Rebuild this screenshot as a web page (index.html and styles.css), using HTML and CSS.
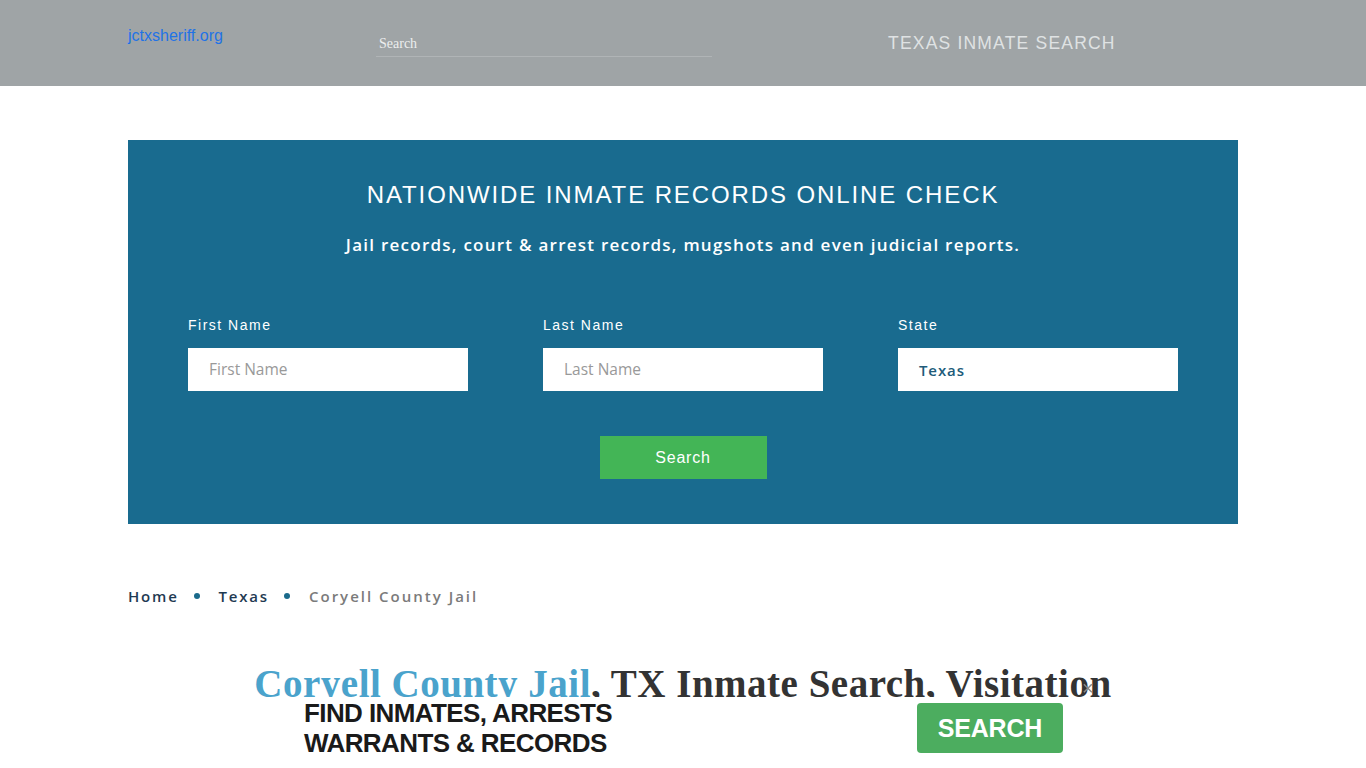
FILE: index.html
```html
<!DOCTYPE html>
<html lang="en">
<head>
<meta charset="utf-8">
<title>Coryell County Jail, TX Inmate Search, Visitation</title>
<link rel="stylesheet" href="styles.css">
</head>
<body>
<header class="topbar">
  <div class="container topbar-inner">
    <a class="logo" href="#">jctxsheriff.org</a>
    <div class="top-search"><input type="text" placeholder="Search"></div>
    <div class="top-title">TEXAS INMATE SEARCH</div>
  </div>
</header>

<main class="container">
  <section class="hero">
    <h2 class="hero-title">NATIONWIDE INMATE RECORDS ONLINE CHECK</h2>
    <p class="hero-sub">Jail records, court &amp; arrest records, mugshots and even judicial reports.</p>
    <form class="hero-form">
      <div class="field">
        <label>First Name</label>
        <input type="text" placeholder="First Name">
      </div>
      <div class="field">
        <label>Last Name</label>
        <input type="text" placeholder="Last Name">
      </div>
      <div class="field">
        <label>State</label>
        <div class="select">Texas</div>
      </div>
    </form>
    <div class="hero-btn-row"><button class="hero-btn" type="button">Search</button></div>
  </section>

  <nav class="crumbs">
    <a class="crumb" href="#">Home</a>
    <span class="dot"></span>
    <a class="crumb" href="#">Texas</a>
    <span class="dot"></span>
    <span class="crumb current">Coryell County Jail</span>
  </nav>

  <h1 class="page-title"><span class="hl">Coryell County Jail</span>, TX Inmate Search, Visitation</h1>
</main>

<div class="adbar">
  <div class="adbar-inner">
    <div class="ad-text">FIND INMATES, ARRESTS<br>WARRANTS &amp; RECORDS</div>
    <button class="ad-btn" type="button">SEARCH</button>
  </div>
  <span class="ad-close">&times;</span>
</div>
</body>
</html>
```

FILE: styles.css
```css
* { box-sizing: border-box; }
html, body { margin: 0; padding: 0; }
body {
  font-family: "Liberation Sans", Arial, sans-serif;
  background: #fff;
  color: #333;
  height: 768px;
  overflow: hidden;
}
.container {
  width: 1110px;
  margin: 0 auto;
}
.topbar {
  background: #9fa4a6;
  height: 86px;
}
.topbar-inner {
  display: flex;
  align-items: flex-start;
  height: 86px;
}
.logo {
  display: block;
  width: 251px;
  margin-top: 27px;
  font-size: 16px;
  color: #1f73e6;
  text-decoration: none;
  line-height: 18px;
}
.top-search {
  width: 336px;
  margin-top: 33px;
  margin-left: -3px;
  border-bottom: 1px solid #b0b4b6;
}
.top-search input {
  width: 100%;
  border: 0;
  background: transparent;
  font-family: "Liberation Serif", "Times New Roman", serif;
  font-size: 14px;
  color: #eee;
  padding: 3px 3px 4px;
  outline: none;
}
.top-search input::placeholder { color: #eceeee; }
.top-title {
  margin-left: 176px;
  margin-top: 33px;
  font-size: 17.5px;
  letter-spacing: 1.2px;
  color: #dfe2e3;
  line-height: 20px;
}

.hero {
  margin-top: 54px;
  background: #196b8f;
  padding: 40px 60px 45px;
  color: #fff;
  text-align: center;
}
.hero-title {
  margin: 0;
  font-weight: normal;
  font-size: 24px;
  line-height: 30px;
  letter-spacing: 1.9px;
}
.hero-sub {
  margin: 23px 0 0;
  font-family: "Open Sans", sans-serif;
  font-weight: 600;
  font-size: 17px;
  line-height: 24px;
  letter-spacing: 1.25px;
}
.hero-form {
  margin-top: 59px;
  display: grid;
  grid-template-columns: 280px 280px 280px;
  column-gap: 75px;
  text-align: left;
}
.field label {
  display: block;
  font-size: 14px;
  line-height: 18px;
  letter-spacing: 1.5px;
  margin-bottom: 14px;
}
.field input, .field .select {
  display: block;
  width: 280px;
  height: 43px;
  border: 0;
  background: #fff;
  padding: 0 21px;
  font-family: "Open Sans", sans-serif;
  font-size: 15.5px;
  outline: none;
}
.field input { padding-bottom: 2px; }
.field input::placeholder { color: #999; font-weight: 500; }
.field .select {
  line-height: 45px;
  color: #215b7a;
  font-weight: 600;
  font-size: 15px;
  letter-spacing: 0.9px;
}
.hero-btn-row {
  margin-top: 45px;
  display: flex;
  justify-content: center;
}
.hero-btn {
  width: 167px;
  height: 43px;
  border: 0;
  background: #43b556;
  color: #fff;
  font-family: "Liberation Sans", Arial, sans-serif;
  font-size: 16px;
  letter-spacing: 0.8px;
}

.crumbs {
  margin-top: 61px;
  display: flex;
  align-items: center;
  font-family: "Open Sans", sans-serif;
  font-weight: 600;
  font-size: 15px;
  letter-spacing: 1.8px;
  line-height: 22px;
}
.crumb { text-decoration: none; color: #1f3a52; }
.crumb.current { color: #7b7b7b; letter-spacing: 2px; }
.dot {
  width: 6px;
  height: 6px;
  border-radius: 50%;
  background: #1a6a8b;
  margin: 0 19px 0 15px;
}

.page-title {
  margin: 55px 0 0;
  text-align: center;
  font-family: "Liberation Serif", "Times New Roman", serif;
  font-weight: bold;
  font-size: 39px;
  line-height: 44px;
  color: #333;
  letter-spacing: 0.5px;
}
.page-title .hl { color: #4aa3cc; }

.adbar {
  position: fixed;
  left: 0;
  right: 0;
  bottom: 0;
  height: 71px;
  background: #fff;
}
.adbar-inner {
  width: 759px;
  margin-left: 304px;
  display: flex;
  align-items: flex-start;
  justify-content: space-between;
}
.ad-text {
  margin-top: 1px;
  font-family: "Liberation Sans", Arial, sans-serif;
  font-weight: bold;
  font-size: 26px;
  line-height: 30px;
  color: #1a1a1a;
  letter-spacing: -0.6px;
}
.ad-btn {
  margin-top: 6px;
  width: 146px;
  height: 50px;
  border: 0;
  border-radius: 4px;
  background: #4cad5f;
  color: #fff;
  font-family: "Liberation Sans", Arial, sans-serif;
  font-weight: bold;
  font-size: 25px;
  letter-spacing: -0.2px;
}
.ad-close {
  position: absolute;
  left: 1082px;
  top: -19px;
  font-size: 20px;
  color: #888;
  line-height: 20px;
}
```
